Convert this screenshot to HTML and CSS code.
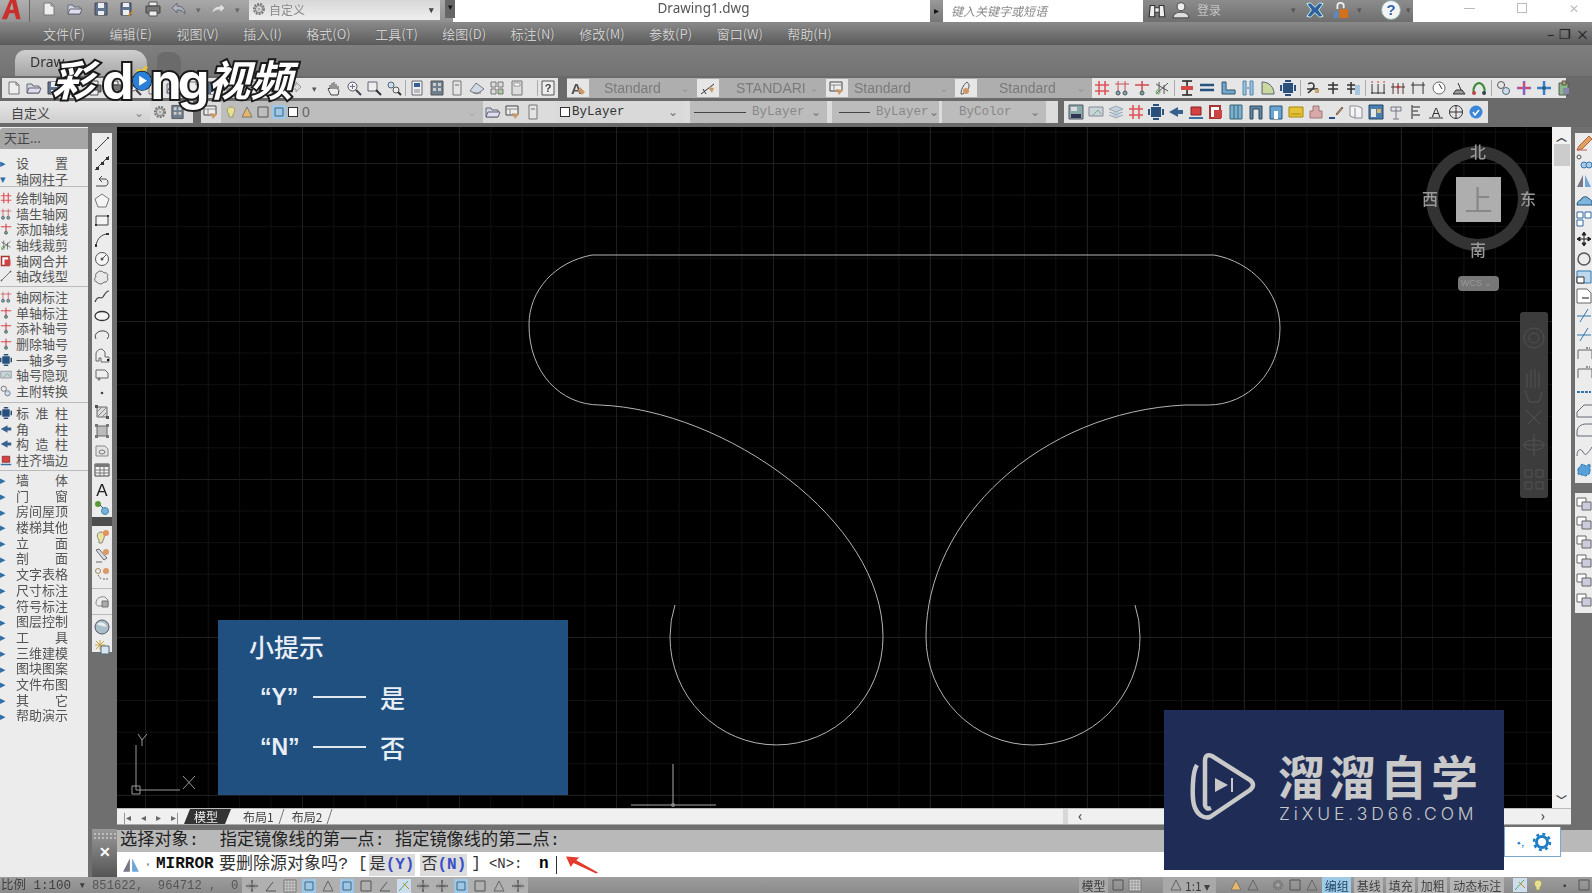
FILE: index.html
```html
<!DOCTYPE html>
<html lang="zh">
<head>
<meta charset="utf-8">
<title>Drawing1.dwg</title>
<link rel="stylesheet" href="styles.css">
</head>
<body>
<svg class="defs" aria-hidden="true">
<defs>
<symbol id="doc" viewBox="0 0 16 16"><path d="M3 2h7l3 3v9H3z" fill="#eee" stroke="#777"/><path d="M10 2v3h3" fill="none" stroke="#777"/></symbol>
<symbol id="open" viewBox="0 0 16 16"><path d="M1 4h5l1 2h6v7H1z" fill="#cfd6dc" stroke="#667"/><path d="M3 8h12l-2 5H1z" fill="#dde" stroke="#667"/></symbol>
<symbol id="save" viewBox="0 0 16 16"><path d="M2 2h12v12H2z" fill="#5f7590" stroke="#445"/><path d="M5 2h6v5H5zM5 10h6v4H5z" fill="#eee"/></symbol>
<symbol id="saveas" viewBox="0 0 16 16"><path d="M2 2h10v12H2z" fill="#5f7590" stroke="#445"/><path d="M4 2h6v4H4zM4 9h6v5H4z" fill="#eee"/><path d="M9 14l5-5 1 1-5 5z" fill="#d98b2b"/></symbol>
<symbol id="print" viewBox="0 0 16 16"><path d="M4 1h8v4H4z" fill="#eee" stroke="#555"/><path d="M1 5h14v7H1z" fill="#777" stroke="#444"/><path d="M4 10h8v5H4z" fill="#eee" stroke="#555"/></symbol>
<symbol id="undo" viewBox="0 0 16 16"><path d="M6 2L1 7l5 5V9c4 0 6 1 8 4 0-5-3-8-8-8z" fill="#aab2ba" stroke="#667"/></symbol>
<symbol id="redo" viewBox="0 0 16 16"><path d="M10 2l5 5-5 5V9C6 9 4 10 2 13c0-5 3-8 8-8z" fill="#ddd" stroke="#999"/></symbol>
<symbol id="gear" viewBox="0 0 16 16"><circle cx="8" cy="8" r="5" fill="none" stroke="#777" stroke-width="2" stroke-dasharray="2 1"/><circle cx="8" cy="8" r="3.5" fill="none" stroke="#777"/><circle cx="8" cy="8" r="1.5" fill="#aaa"/></symbol>
<symbol id="pan" viewBox="0 0 16 16"><path d="M4 9V5m2 4V3m2 6V2m2 7V4m2 6V6M4 9L3 8 2 9l3 6h7l1-5" fill="#eee" stroke="#444"/></symbol>
<symbol id="zoom" viewBox="0 0 16 16"><circle cx="6.5" cy="6.5" r="4.5" fill="#eef" stroke="#555"/><path d="M10 10l5 5" stroke="#444" stroke-width="2"/><path d="M4 6.500h5M6.500 4v5" stroke="#777"/></symbol>
<symbol id="zoomw" viewBox="0 0 16 16"><path d="M2 2h9v9H2z" fill="#eee" stroke="#667"/><path d="M10 10l5 5" stroke="#333" stroke-width="2"/></symbol>
<symbol id="zoomp" viewBox="0 0 16 16"><circle cx="5" cy="5" r="3" fill="#cde" stroke="#567"/><circle cx="10" cy="10" r="3" fill="#eee" stroke="#555"/><path d="M12 12l3 3" stroke="#333" stroke-width="2"/></symbol>
<symbol id="props" viewBox="0 0 16 16"><path d="M3 1h10v14H3z" fill="#eee" stroke="#667"/><path d="M5 3h6v4H5z" fill="#345f95"/><path d="M5 10h6M5 12h6" stroke="#888"/></symbol>
<symbol id="adc" viewBox="0 0 16 16"><path d="M2 1h12v14H2z" fill="#6f7f8f" stroke="#555"/><path d="M4 3h3v3H4zM9 3h3v3H9zM4 8h3v3H4zM9 8h3v3H9z" fill="#ccc"/></symbol>
<symbol id="tool" viewBox="0 0 16 16"><path d="M4 1h8v14H4z" fill="#e4e4e4" stroke="#777"/><path d="M6 4h4v2H6z" fill="#aaa"/></symbol>
<symbol id="sheet" viewBox="0 0 16 16"><path d="M1 11l6-8 8 6-7 5z" fill="#cfdbe4" stroke="#778"/><path d="M4 13h8" stroke="#777"/></symbol>
<symbol id="mark" viewBox="0 0 16 16"><path d="M2 2h5v5H2zM9 2h5v5H9zM2 9h5v5H2z" fill="#ddd" stroke="#777"/><path d="M9 9h5v5H9z" fill="#ac9" stroke="#777"/></symbol>
<symbol id="calc" viewBox="0 0 16 16"><path d="M3 1h10v14H3z" fill="#ddd" stroke="#777"/><path d="M5 3h6v3H5z" fill="#fff" stroke="#999"/></symbol>
<symbol id="q" viewBox="0 0 16 16"><path d="M2 1h12v14H2z" fill="#eee" stroke="#555"/><text x="8" y="12" text-anchor="middle" font-size="11" font-family="Liberation Sans" fill="#444" font-weight="700">?</text></symbol>
<symbol id="ast" viewBox="0 0 16 16"><text x="1" y="14" font-size="15" font-family="Liberation Sans" font-weight="700" fill="#555">A</text><path d="M10 7l5 5-3 3-4-4z" fill="#c96"/></symbol>
<symbol id="dst" viewBox="0 0 16 16"><path d="M1 14L14 4M3 9l3 5" stroke="#333" fill="none"/><path d="M8 7l6 1-2 5z" fill="#c96"/></symbol>
<symbol id="tst" viewBox="0 0 16 16"><path d="M1 2h12v9H1z" fill="#eee" stroke="#444"/><path d="M1 5h12M5 5v6" stroke="#888"/><path d="M7 9l7 1-4 5z" fill="#c96"/></symbol>
<symbol id="mst" viewBox="0 0 16 16"><path d="M3 14c0-4 2-9 6-12 2 2 3 4 1 7l-5 5z" fill="none" stroke="#555"/><circle cx="8" cy="11" r="3" fill="#c96"/></symbol>
<symbol id="hash" viewBox="0 0 16 16"><path d="M5 1v14M11 1v14M1 5h14M1 11h14" stroke="#e0545a" stroke-width="1.600"/></symbol>
<symbol id="axis" viewBox="0 0 16 16"><path d="M4 1v10M11 1v10M1 4h14" stroke="#c85058"/><circle cx="4" cy="13" r="2" fill="#7ab" stroke="#555"/><circle cx="11" cy="13" r="2" fill="#7ab" stroke="#555"/></symbol>
<symbol id="axt" viewBox="0 0 16 16"><path d="M1 5h14M8 1v10" stroke="#d04a50" stroke-width="1.500"/><circle cx="8" cy="13" r="2" fill="#6a9" stroke="#555"/></symbol>
<symbol id="scis" viewBox="0 0 16 16"><path d="M2 14L14 3M2 4l12 7M5 2v10M10 5v9" stroke="#555" fill="none"/><circle cx="4" cy="12" r="2" fill="none" stroke="#6a6"/></symbol>
<symbol id="col" viewBox="0 0 16 16"><path d="M3 1h10M3 15h10M8 1v14" stroke="#222" stroke-width="1.500"/><path d="M2 6h12v4H2z" fill="#d24b45"/></symbol>
<symbol id="eq" viewBox="0 0 16 16"><path d="M1 5h14M1 10h14" stroke="#27517e" stroke-width="2.500"/></symbol>
<symbol id="wall" viewBox="0 0 16 16"><path d="M2 2v12h13v-4H6V2z" fill="#6fa8d0" stroke="#356"/></symbol>
<symbol id="bars" viewBox="0 0 16 16"><path d="M3 1v14h3V1zM10 1v14h3V1z" fill="#9cc3e0" stroke="#58a"/><path d="M7 8h2" stroke="#36a"/></symbol>
<symbol id="fan" viewBox="0 0 16 16"><path d="M2 14V2c7 0 12 5 12 12z" fill="#cdd8a0" stroke="#567"/></symbol>
<symbol id="dia" viewBox="0 0 16 16"><path d="M3 3h10v10H3z" fill="#29507d"/><path d="M5 1h6M5 15h6M1 5v6M15 5v6" stroke="#29507d" stroke-width="2"/></symbol>
<symbol id="d1" viewBox="0 0 16 16"><path d="M3 4c3-2 6-1 6 2s-3 4-6 7M2 9h11" stroke="#333" stroke-width="1.500" fill="none"/><path d="M10 9h4v4h-4z" fill="#c8a56a"/></symbol>
<symbol id="d2" viewBox="0 0 16 16"><path d="M3 5h10M3 9h10M8 2v12" stroke="#333" stroke-width="1.500"/></symbol>
<symbol id="d3" viewBox="0 0 16 16"><path d="M2 5h8M2 9h8M6 2v12" stroke="#333" stroke-width="1.500"/><path d="M10 5h5v10h-5z" fill="#a8c6e2"/></symbol>
<symbol id="dt" viewBox="0 0 16 16"><path d="M2 4v10M8 4v10M14 4v10M1 13h14" stroke="#333"/><path d="M2 1v2M8 1v2M14 1v2" stroke="#d33"/></symbol>
<symbol id="dt2" viewBox="0 0 16 16"><path d="M3 3v11M8 3v11M13 3v11M1 7h14" stroke="#533"/><circle cx="8" cy="7" r="1.500" fill="#c33"/></symbol>
<symbol id="dt3" viewBox="0 0 16 16"><path d="M3 2v12M13 2v12M1 5h14" stroke="#333"/></symbol>
<symbol id="clock" viewBox="0 0 16 16"><circle cx="8" cy="8" r="6" fill="#fff" stroke="#667"/><path d="M8 4l3 5" stroke="#333"/></symbol>
<symbol id="mic" viewBox="0 0 16 16"><path d="M2 14h12l-3-4H5zM7 3l3 7" stroke="#333" fill="#999"/></symbol>
<symbol id="loop" viewBox="0 0 16 16"><path d="M3 13c-2-5 2-10 5-10s7 5 5 10" fill="none" stroke="#3a8a3a" stroke-width="2"/><circle cx="3" cy="13" r="2" fill="#b44"/><circle cx="13" cy="13" r="2" fill="#345"/></symbol>
<symbol id="ring" viewBox="0 0 16 16"><circle cx="5" cy="5" r="3.500" fill="none" stroke="#555"/><circle cx="10" cy="11" r="3.500" fill="#cde" stroke="#567"/></symbol>
<symbol id="cross" viewBox="0 0 16 16"><path d="M8 1v14M1 8h14" stroke="#8860c0" stroke-width="2.500"/><path d="M8 3v3M3 8h3M10 8h3" stroke="#e44" stroke-width="2"/></symbol>
<symbol id="crossb" viewBox="0 0 16 16"><path d="M8 1v14M1 8h14" stroke="#3d7fc8" stroke-width="2.500"/><circle cx="8" cy="8" r="2" fill="#267"/></symbol>
<symbol id="clip" viewBox="0 0 16 16"><path d="M3 3h9v12H3z" fill="#8b8" stroke="#555"/><path d="M6 1h4v4H6z" fill="#b96" stroke="#555"/><path d="M7 8h6v6H7z" fill="#88a"/></symbol>
<symbol id="dwg" viewBox="0 0 16 16"><path d="M1 1h14v14H1z" fill="#8aa" stroke="#556"/><path d="M3 10h10v4H3z" fill="#335"/><path d="M3 3h6v4H3z" fill="#ddd"/></symbol>
<symbol id="map" viewBox="0 0 16 16"><path d="M1 3h14v9H1z" fill="#c8d4d8" stroke="#889"/><path d="M4 12l6-6 3 4" stroke="#7a8" fill="none"/></symbol>
<symbol id="stack" viewBox="0 0 16 16"><path d="M1 5l7-3 7 3-7 3zM1 8l7 3 7-3M1 11l7 3 7-3" fill="#c4d0da" stroke="#9ab"/></symbol>
<symbol id="ctr" viewBox="0 0 16 16"><path d="M1 8l9-5v3h5v4h-5v3z" fill="#36628f"/></symbol>
<symbol id="red" viewBox="0 0 16 16"><path d="M3 3h10v8H3z" fill="#d44343" stroke="#822"/><path d="M1 13h14v2H1z" fill="#3a6fa0"/></symbol>
<symbol id="red2" viewBox="0 0 16 16"><path d="M2 2h10v12H2z" fill="#fff" stroke="#a33" stroke-width="2"/><path d="M6 6h8v8H6z" fill="#c44"/></symbol>
<symbol id="blue" viewBox="0 0 16 16"><path d="M2 1h12v14H2z" fill="#7fb0d2" stroke="#367"/><path d="M6 1v14M10 1v14" stroke="#367"/></symbol>
<symbol id="arch" viewBox="0 0 16 16"><path d="M2 15V2h12v13h-3V5H5v10z" fill="#5a86a8" stroke="#345"/></symbol>
<symbol id="arch2" viewBox="0 0 16 16"><path d="M2 15V2h12v13z" fill="#6aa3d0" stroke="#257"/><path d="M6 7h4v8H6z" fill="#fff"/></symbol>
<symbol id="env" viewBox="0 0 16 16"><path d="M1 3h14v10H1z" fill="#e6c23c" stroke="#a80"/><path d="M3 10h10" stroke="#a80"/></symbol>
<symbol id="stamp" viewBox="0 0 16 16"><path d="M5 2h6v5h3v7H2V7h3z" fill="#d9a9a9" stroke="#977"/></symbol>
<symbol id="pen" viewBox="0 0 16 16"><path d="M1 14h6" stroke="#27507f" stroke-width="2"/><path d="M8 10l6-7 1 1-6 7z" fill="#c96" stroke="#765"/></symbol>
<symbol id="book" viewBox="0 0 16 16"><path d="M2 2h7l5 2v10H7l-5-2z" fill="#f4f4f4" stroke="#889"/><path d="M7 4v10" stroke="#889"/></symbol>
<symbol id="win" viewBox="0 0 16 16"><path d="M1 1h14v14H1z" fill="#4a7fae" stroke="#246"/><path d="M3 5h5v8H3z" fill="#e8e8e8"/><path d="M9 5h4v4H9z" fill="#d9b36a"/></symbol>
<symbol id="tree" viewBox="0 0 16 16"><path d="M3 3h10M8 3v12M3 3v4h10V3M5 15h6" stroke="#778" fill="none"/></symbol>
<symbol id="flag" viewBox="0 0 16 16"><path d="M4 1v14M4 3h8M4 7h6M4 11h8" stroke="#666" stroke-width="1.500"/></symbol>
<symbol id="tri" viewBox="0 0 16 16"><text x="8" y="13" text-anchor="middle" font-size="13" font-family="Liberation Sans" fill="#333">A</text><path d="M1 14h14" stroke="#333"/></symbol>
<symbol id="tgt" viewBox="0 0 16 16"><circle cx="8" cy="8" r="6.500" fill="none" stroke="#333"/><path d="M8 1v14M1 8h14" stroke="#333"/></symbol>
<symbol id="hlp" viewBox="0 0 16 16"><circle cx="8" cy="8" r="6.500" fill="#3a86d8"/><path d="M5 8l2 3 4-5" stroke="#fff" fill="none" stroke-width="1.500"/></symbol>
<symbol id="s-line" viewBox="0 0 16 16"><path d="M2 14L14 2" stroke="#444"/><path d="M1 13h2v2H1zM13 1h2v2h-2z" fill="#555"/></symbol>
<symbol id="s-xl" viewBox="0 0 16 16"><path d="M1 15L15 1" stroke="#444"/><path d="M2 12h3v3H2zM7 7h3v3H7zM12 2h3v3h-3z" fill="#333"/></symbol>
<symbol id="s-pl" viewBox="0 0 16 16"><path d="M2 12h9c4 0 4-7 0-7H6M8 2L5 5l3 3" stroke="#444" fill="none"/></symbol>
<symbol id="s-pg" viewBox="0 0 16 16"><path d="M8 1l7 5-3 8H4L1 6z" fill="#f4f4f4" stroke="#777"/></symbol>
<symbol id="s-rc" viewBox="0 0 16 16"><path d="M2 4h12v9H2z" fill="#f4f4f4" stroke="#444"/><path d="M1 12h2v2H1zM13 3h2v2h-2z" fill="#333"/></symbol>
<symbol id="s-ar" viewBox="0 0 16 16"><path d="M2 14C3 6 8 2 14 2" fill="none" stroke="#444"/><path d="M1 12h2v3H1zM12 1h3v2h-3z" fill="#333"/></symbol>
<symbol id="s-ci" viewBox="0 0 16 16"><circle cx="8" cy="8" r="6.500" fill="#f6f6f6" stroke="#555"/><circle cx="8" cy="8" r="1.500" fill="#555"/><path d="M8 8l4-4" stroke="#555"/></symbol>
<symbol id="s-cl" viewBox="0 0 16 16"><path d="M3 3c2-3 6-2 7 0 3-1 5 2 3 4 2 2 0 6-3 5-2 3-6 2-7 0-3 0-3-4-1-5-1-2 0-4 1-4z" fill="#e8e8e8" stroke="#666"/></symbol>
<symbol id="s-sp" viewBox="0 0 16 16"><path d="M1 13c3-8 6-2 8-5s3-6 6-6" fill="none" stroke="#444" stroke-width="1.200"/></symbol>
<symbol id="s-el" viewBox="0 0 16 16"><ellipse cx="8" cy="8" rx="7" ry="4.500" fill="#f4f4f4" stroke="#333" stroke-width="1.300"/></symbol>
<symbol id="s-ea" viewBox="0 0 16 16"><path d="M2 12C-1 7 5 3 10 4s6 5 3 8" fill="none" stroke="#444"/></symbol>
<symbol id="s-in" viewBox="0 0 16 16"><path d="M2 14V7c0-3 3-5 6-5l3 3v5h4v5H7v-4H5v3z" fill="#eee" stroke="#666"/><path d="M13 12h2v2h-2z" fill="#111"/></symbol>
<symbol id="s-bk" viewBox="0 0 16 16"><path d="M2 4h9l3 3v5H2z" fill="#eee" stroke="#666"/><circle cx="5" cy="13" r="1.500" fill="#777"/></symbol>
<symbol id="s-pt" viewBox="0 0 16 16"><circle cx="8" cy="8" r="1.300" fill="#444"/></symbol>
<symbol id="s-ha" viewBox="0 0 16 16"><path d="M3 3h10v10H3z" fill="#ddd" stroke="#666"/><path d="M3 8l5-5M3 13L13 3M8 13l5-5" stroke="#888"/><path d="M1 1h3v3H1zM12 12h3v3h-3z" fill="#555"/></symbol>
<symbol id="s-gr" viewBox="0 0 16 16"><path d="M3 3h10v10H3z" fill="#bbb" stroke="#666"/><path d="M1 1h3v3H1zM12 12h3v3h-3zM12 1h3v3h-3zM1 12h3v3H1z" fill="#777"/></symbol>
<symbol id="s-rg" viewBox="0 0 16 16"><path d="M2 3h9l3 3v7H2z" fill="#e4e4e4" stroke="#888"/><ellipse cx="8" cy="9" rx="3" ry="2" fill="none" stroke="#777"/></symbol>
<symbol id="s-tb" viewBox="0 0 16 16"><path d="M1 2h14v12H1z" fill="#f4f4f4" stroke="#444"/><path d="M1 2h14v3H1z" fill="#777"/><path d="M1 8h14M1 11h14M6 5v9M10 5v9" stroke="#777"/></symbol>
<symbol id="s-A" viewBox="0 0 16 16"><text x="8" y="15" text-anchor="middle" font-size="17" font-family="Liberation Sans" fill="#222">A</text></symbol>
<symbol id="s-ad" viewBox="0 0 16 16"><circle cx="4" cy="4" r="3" fill="#5a9a3a"/><circle cx="11" cy="11" r="3.500" fill="#7ab0dc" stroke="#48a"/><path d="M6 5l3 3" stroke="#555"/></symbol>
<symbol id="s-bulb" viewBox="0 0 16 16"><path d="M5 14V11C2 8 3 3 7 3c3 0 4 3 3 6l-2 5z" fill="#e9e2a0" stroke="#887"/><circle cx="12" cy="4" r="3" fill="#e0935a"/></symbol>
<symbol id="s-mt" viewBox="0 0 16 16"><path d="M2 2l8 10 3-2-8-9z" fill="#ddd" stroke="#667"/><circle cx="12" cy="4" r="3" fill="#d99a66"/><path d="M2 14h6" stroke="#666"/></symbol>
<symbol id="s-lm" viewBox="0 0 16 16"><circle cx="4" cy="4" r="2.500" fill="#eee" stroke="#a85"/><circle cx="12" cy="4" r="3" fill="#d99a66"/><path d="M4 8l3 4M9 12h5" stroke="#666" stroke-dasharray="2 1"/></symbol>
<symbol id="s-ld" viewBox="0 0 16 16"><path d="M2 10c0-5 5-7 9-6l3 3v6H5c-2 0-3-1-3-3z" fill="none" stroke="#888"/><path d="M8 8h6v6H8z" fill="#aaa" stroke="#777"/></symbol>
<symbol id="s-gl" viewBox="0 0 16 16"><circle cx="8" cy="8" r="7" fill="#aac0c8" stroke="#556"/><path d="M3 5c4-3 8-1 10 3-2-1-8-1-10-3z" fill="#eee"/></symbol>
<symbol id="s-sun" viewBox="0 0 16 16"><path d="M6 1v10M1 6h10M2 2l8 8M10 2l-8 8" stroke="#c8a440"/><path d="M7 7h8v8H7z" fill="#d8e6f2" stroke="#567"/></symbol>
<symbol id="r-er" viewBox="0 0 16 16"><path d="M1 15l2-4L13 1l3 3L6 14z" fill="#e0a060" stroke="#a64"/><path d="M1 15h10" stroke="#c55"/></symbol>
<symbol id="r-co" viewBox="0 0 16 16"><circle cx="3" cy="3" r="2" fill="none" stroke="#555"/><circle cx="8" cy="11" r="3" fill="#a9c9e6" stroke="#37a"/><circle cx="13" cy="11" r="3" fill="#a9c9e6" stroke="#37a"/></symbol>
<symbol id="r-mi" viewBox="0 0 16 16"><path d="M7 2v12H1z" fill="#778"/><path d="M9 2v12h6z" fill="#6ea6d6"/></symbol>
<symbol id="r-of" viewBox="0 0 16 16"><path d="M1 13c0-3 2-5 4-5 0-3 6-5 8-1 2 0 3 2 3 6z" fill="#7fb4dd" stroke="#257"/></symbol>
<symbol id="r-ay" viewBox="0 0 16 16"><path d="M1 1h6v6H1zM9 1h6v6H9zM1 9h6v6H1z" fill="#fff" stroke="#36a"/></symbol>
<symbol id="r-mv" viewBox="0 0 16 16"><path d="M8 1l2 3H6zM8 15l-2-3h4zM1 8l3-2v4zM15 8l-3 2V6zM4 8h8M8 4v8" fill="#222" stroke="#222"/></symbol>
<symbol id="r-ro" viewBox="0 0 16 16"><circle cx="8" cy="9" r="6" fill="none" stroke="#555" stroke-width="1.500"/></symbol>
<symbol id="r-sc" viewBox="0 0 16 16"><path d="M1 2h14v12H1z" fill="#bcd8ee" stroke="#37a"/><path d="M1 8h7v6H1z" fill="#fff" stroke="#333"/></symbol>
<symbol id="r-st" viewBox="0 0 16 16"><path d="M1 1h10l4 4v10H1z" fill="#fff" stroke="#666"/><path d="M6 10h7" stroke="#111"/></symbol>
<symbol id="r-tr" viewBox="0 0 16 16"><path d="M1 9h14M4 15L12 2" stroke="#37a"/></symbol>
<symbol id="r-bx" viewBox="0 0 16 16"><path d="M2 13V4h14v9" fill="none" stroke="#666"/><path d="M10 2h4" stroke="#333" stroke-dasharray="2 1"/></symbol>
<symbol id="r-j" viewBox="0 0 16 16"><path d="M1 8h14" stroke="#37a" stroke-dasharray="3 1" stroke-width="2"/></symbol>
<symbol id="r-ch" viewBox="0 0 16 16"><path d="M1 14V9l7-7h8M1 14h15" fill="none" stroke="#667"/></symbol>
<symbol id="r-fi" viewBox="0 0 16 16"><path d="M1 14V10C1 5 5 2 10 2h6M1 14h15" fill="none" stroke="#667"/></symbol>
<symbol id="r-bl" viewBox="0 0 16 16"><path d="M1 14c0-7 4-8 6-4s4 3 9-5" fill="none" stroke="#667"/></symbol>
<symbol id="r-ex" viewBox="0 0 16 16"><path d="M2 8l4-5 4 2 4-2v9l-4 3-8-2z" fill="#5aa0d8" stroke="#27a" stroke-dasharray="3 1"/></symbol>
<symbol id="r-w1" viewBox="0 0 16 16"><path d="M1 2h9v8H1z" fill="#fff" stroke="#666"/><path d="M6 6h9v8H6z" fill="#ccd" stroke="#666"/></symbol>
<symbol id="grid" viewBox="0 0 14 14"><path d="M1 1h12v12H1z" fill="#cfcfcf" stroke="#777"/><path d="M4 1v12M7 1v12M10 1v12M1 4h12M1 7h12M1 10h12" stroke="#888" stroke-width=".7"/></symbol>
<symbol id="sq" viewBox="0 0 14 14"><path d="M2 2h10v10H2z" fill="none" stroke="#555"/></symbol>
<symbol id="sqb" viewBox="0 0 14 14"><path d="M0 0h14v14H0z" fill="#9cc7e8"/><path d="M3 3h8v8H3z" fill="none" stroke="#467"/></symbol>
<symbol id="plus" viewBox="0 0 14 14"><path d="M7 1v12M1 7h12" stroke="#555" stroke-width="1.500"/><path d="M3 5h8v4H3z" fill="none" stroke="#999"/></symbol>
<symbol id="ang" viewBox="0 0 14 14"><path d="M2 12h10M2 12l7-9" stroke="#555" fill="none"/></symbol>
<symbol id="iso" viewBox="0 0 14 14"><path d="M0 0h14v14H0z" fill="#cde"/><path d="M2 12L11 2" stroke="#5a6"/><path d="M6 4l6 6" stroke="#c80"/></symbol>
<symbol id="bulb" viewBox="0 0 14 14"><path d="M5 12V9C2 7 3 2 7 2s5 5 2 7v3z" fill="#e8e090" stroke="#996"/></symbol>
<symbol id="ltri" viewBox="0 0 14 14"><path d="M7 2l5 10H2z" fill="none" stroke="#666"/></symbol>
<symbol id="ltri2" viewBox="0 0 14 14"><path d="M7 2l5 10H2z" fill="#e9b76a" stroke="#777"/></symbol>
<symbol id="bino" viewBox="0 0 16 16"><path d="M2 4h4v10H1zM10 4h4l1 10h-5zM6 6h4v4H6z" fill="#eee" stroke="#333"/></symbol>
<symbol id="user" viewBox="0 0 16 16"><circle cx="8" cy="5" r="3.500" fill="#eee" stroke="#555"/><path d="M1 15c0-4 3-5 7-5s7 1 7 5z" fill="#ddd" stroke="#555"/></symbol>
<symbol id="xx" viewBox="0 0 20 20"><path d="M1 3l4-1 5 5 5-5 4 1-5 7 5 7-4 1-5-5-5 5-4-1 5-7z" fill="#2f5f9f" stroke="#cfe"/></symbol>
<symbol id="lock" viewBox="0 0 18 20"><path d="M5 9V5c0-4 7-4 7 0v3" fill="none" stroke="#eee" stroke-width="2"/><path d="M7 9h10v10H7z" fill="#d2701c"/><path d="M1 13l5-3v9H1z" fill="#5a8ac0"/></symbol>
<symbol id="help" viewBox="0 0 22 22"><circle cx="11" cy="11" r="9.500" fill="#f4f4f4" stroke="#8aa"/><text x="11" y="16" text-anchor="middle" font-size="15" font-weight="700" font-family="Liberation Sans" fill="#2a63b0">?</text></symbol>
<symbol id="autocad" viewBox="0 0 28 32"><path d="M2 28L13 2h5l6 26h-5l-2-7h-6l-3 7zM11 17h5l-2-9z" fill="#c9302c"/></symbol>
<symbol id="cog" viewBox="0 0 20 20"><circle cx="10" cy="10" r="5.500" fill="none" stroke="#1f7fc4" stroke-width="3"/><circle cx="10" cy="10" r="8" fill="none" stroke="#1f7fc4" stroke-width="2.500" stroke-dasharray="3 3.300"/></symbol>
</defs>
</svg>

<div class="app">
  <header class="titlebar">
    <div class="qat">
      <svg class="i t"><use href="#doc"/></svg><svg class="i t"><use href="#open"/></svg><svg class="i t"><use href="#save"/></svg><svg class="i t"><use href="#saveas"/></svg><svg class="i t"><use href="#print"/></svg><svg class="i t"><use href="#undo"/></svg><span class="dd">▾</span><svg class="i t"><use href="#redo"/></svg><span class="dd">▾</span>
      <div class="qcombo"><svg class="i"><use href="#gear"/></svg><span>自定义</span><b>▾</b></div>
      <div class="qdrop">▾</div>
    </div>
    <div class="apptitle">Drawing1.dwg</div>
    <div class="search"><span class="sarrow">▸</span><span class="sfield">键入关键字或短语</span></div>
    <div class="info">
      <svg class="i"><use href="#bino"/></svg><svg class="i"><use href="#user"/></svg><span class="login">登录</span>
      <span class="dd gap1">▾</span>
      <svg class="i ib"><use href="#xx"/></svg><svg class="i ib"><use href="#lock"/></svg><span class="dd">▾</span>
      <svg class="i ic"><use href="#help"/></svg><span class="dd">▾</span>
    </div>
    <div class="winbtns"><span class="wmin"></span><span class="wmax"></span><span class="wclose">✕</span></div>
  </header>
  <div class="appbtn"><svg class="abi"><use href="#autocad"/></svg></div>

  <nav class="menubar">
    <span>文件(F)</span><span>编辑(E)</span><span>视图(V)</span><span>插入(I)</span><span>格式(O)</span><span>工具(T)</span><span>绘图(D)</span><span>标注(N)</span><span>修改(M)</span><span>参数(P)</span><span>窗口(W)</span><span>帮助(H)</span>
    <div class="mdi">– ❐ ×</div>
  </nav>

  <div class="tabstrip"><div class="doctab">Draw</div><div class="newtab"></div></div>

  <div class="toolbars">
    <div class="tbrow">
      <div class="seg s1">
        <svg class="i t20"><use href="#doc"/></svg><svg class="i t20"><use href="#open"/></svg><svg class="i t20"><use href="#save"/></svg><svg class="i t20"><use href="#saveas"/></svg><svg class="i t20"><use href="#print"/></svg><svg class="i t20"><use href="#print"/></svg><svg class="i t20"><use href="#zoom"/></svg><svg class="i t20"><use href="#doc"/></svg><svg class="i t20"><use href="#open"/></svg><svg class="i t20"><use href="#doc"/></svg><svg class="i t20"><use href="#save"/></svg><svg class="i t20"><use href="#open"/></svg><svg class="i t20"><use href="#doc"/></svg><svg class="i t20"><use href="#undo"/></svg>
        <svg class="i t20"><use href="#redo"/></svg><span class="dd t20b">▾</span>
        <svg class="i t20"><use href="#pan"/></svg><svg class="i t20"><use href="#zoom"/></svg><svg class="i t20"><use href="#zoomw"/></svg><svg class="i t20"><use href="#zoomp"/></svg>
        <i class="sep"></i>
        <svg class="i t20"><use href="#props"/></svg><svg class="i t20"><use href="#adc"/></svg><svg class="i t20"><use href="#tool"/></svg><svg class="i t20"><use href="#sheet"/></svg><svg class="i t20"><use href="#mark"/></svg><svg class="i t20"><use href="#calc"/></svg>
        <i class="sep sepq"></i>
        <svg class="i t20"><use href="#q"/></svg>
      </div>
      <div class="seg s2">
        <div class="sty w1"><svg class="i"><use href="#ast"/></svg><span class="pc pc1">Standard</span><b>⌄</b></div>
        <div class="sty w2"><svg class="i"><use href="#dst"/></svg><span class="pc pc2">STANDARI</span><b>⌄</b></div>
        <div class="sty w3"><svg class="i"><use href="#tst"/></svg><span class="pc pc3">Standard</span><b>⌄</b></div>
        <div class="sty w4"><svg class="i"><use href="#mst"/></svg><span class="pc pc4">Standard</span><b>⌄</b></div>
      </div>
      <div class="seg s3">
        <svg class="i t20"><use href="#hash"/></svg><svg class="i t20"><use href="#axis"/></svg><svg class="i t20"><use href="#axt"/></svg><svg class="i t20"><use href="#scis"/></svg><i class="sep"></i>
        <svg class="i t20"><use href="#col"/></svg><svg class="i t20"><use href="#eq"/></svg><svg class="i t20"><use href="#wall"/></svg><svg class="i t20"><use href="#bars"/></svg><svg class="i t20"><use href="#fan"/></svg><svg class="i t20"><use href="#dia"/></svg><i class="sep"></i>
        <svg class="i t20"><use href="#d1"/></svg><svg class="i t20"><use href="#d2"/></svg><svg class="i t20"><use href="#d3"/></svg><i class="sep"></i>
        <svg class="i t20"><use href="#dt"/></svg><svg class="i t20"><use href="#dt2"/></svg><svg class="i t20"><use href="#dt3"/></svg><svg class="i t20"><use href="#clock"/></svg><svg class="i t20"><use href="#mic"/></svg><svg class="i t20"><use href="#loop"/></svg><i class="sep"></i>
        <svg class="i t20"><use href="#ring"/></svg><svg class="i t20"><use href="#cross"/></svg><svg class="i t20"><use href="#crossb"/></svg><svg class="i t20"><use href="#clip"/></svg>
      </div>
    </div>
    <div class="tbrow r2">
      <div class="seg c1"><div class="wscombo"><span>自定义</span><b>⌄</b></div><svg class="i t20"><use href="#gear"/></svg><svg class="i t16"><use href="#adc"/></svg></div>
      <div class="seg c2">
        <svg class="i t20"><use href="#tst"/></svg><div class="layer"><svg class="l"><use href="#bulb"/></svg><svg class="l"><use href="#ltri2"/></svg><svg class="l"><use href="#sq"/></svg><svg class="l"><use href="#sqb"/></svg><i class="swatch"></i><span>0</span><b>⌄</b></div>
        <svg class="i t20"><use href="#open"/></svg><svg class="i t20"><use href="#tst"/></svg><svg class="i t20"><use href="#tool"/></svg>
      </div>
      <div class="seg c3">
        <div class="by b1"><i class="swatch"></i><span>ByLayer</span><b>⌄</b></div>
        <div class="by b2"><i class="ln ln1"></i><span class="dim">ByLayer</span><b>⌄</b></div>
        <div class="by b3"><i class="ln ln2"></i><span class="dim">ByLayer</span><b>⌄</b></div>
        <div class="by b4"><span class="dim">ByColor</span><b>⌄</b></div>
      </div>
      <div class="seg c4">
        <svg class="i t20"><use href="#dwg"/></svg><svg class="i t20"><use href="#map"/></svg><svg class="i t20"><use href="#stack"/></svg><svg class="i t20"><use href="#hash"/></svg><svg class="i t20"><use href="#dia"/></svg><svg class="i t20"><use href="#ctr"/></svg><svg class="i t20"><use href="#red"/></svg><svg class="i t20"><use href="#red2"/></svg><svg class="i t20"><use href="#blue"/></svg><svg class="i t20"><use href="#arch"/></svg><svg class="i t20"><use href="#arch2"/></svg><svg class="i t20"><use href="#env"/></svg><svg class="i t20"><use href="#stamp"/></svg><svg class="i t20"><use href="#pen"/></svg><svg class="i t20"><use href="#book"/></svg><svg class="i t20"><use href="#win"/></svg><svg class="i t20"><use href="#tree"/></svg><svg class="i t20"><use href="#flag"/></svg><svg class="i t20"><use href="#tri"/></svg><svg class="i t20"><use href="#tgt"/></svg><svg class="i t20"><use href="#hlp"/></svg>
      </div>
    </div>
  </div>

  <main class="workspace">
    <aside class="tpanel">
      <div class="tphead">天正...</div>
      <div class="group">
        <div class="it"><i class="ar">▸</i><p class="j"><span>设</span><span>置</span></p></div>
        <div class="it"><i class="ar dn">▾</i><p>轴网柱子</p></div>
      </div>
      <div class="group">
        <div class="it"><svg class="gi"><use href="#hash"/></svg><p>绘制轴网</p></div>
        <div class="it"><svg class="gi"><use href="#axis"/></svg><p>墙生轴网</p></div>
        <div class="it"><svg class="gi"><use href="#axt"/></svg><p>添加轴线</p></div>
        <div class="it"><svg class="gi"><use href="#scis"/></svg><p>轴线裁剪</p></div>
        <div class="it"><svg class="gi"><use href="#red2"/></svg><p>轴网合并</p></div>
        <div class="it"><svg class="gi"><use href="#s-line"/></svg><p>轴改线型</p></div>
      </div>
      <div class="group">
        <div class="it"><svg class="gi"><use href="#axis"/></svg><p>轴网标注</p></div>
        <div class="it"><svg class="gi"><use href="#axt"/></svg><p>单轴标注</p></div>
        <div class="it"><svg class="gi"><use href="#axt"/></svg><p>添补轴号</p></div>
        <div class="it"><svg class="gi"><use href="#axt"/></svg><p>删除轴号</p></div>
        <div class="it"><svg class="gi"><use href="#dia"/></svg><p>一轴多号</p></div>
        <div class="it"><svg class="gi"><use href="#map"/></svg><p>轴号隐现</p></div>
        <div class="it"><svg class="gi"><use href="#ring"/></svg><p>主附转换</p></div>
      </div>
      <div class="group">
        <div class="it"><svg class="gi"><use href="#dia"/></svg><p class="j"><span>标</span><span>准</span><span>柱</span></p></div>
        <div class="it"><svg class="gi"><use href="#ctr"/></svg><p class="j"><span>角</span><span>柱</span></p></div>
        <div class="it"><svg class="gi"><use href="#ctr"/></svg><p class="j"><span>构</span><span>造</span><span>柱</span></p></div>
        <div class="it"><svg class="gi"><use href="#red"/></svg><p>柱齐墙边</p></div>
      </div>
      <div class="group last">
        <div class="it"><i class="ar">▸</i><p class="j"><span>墙</span><span>体</span></p></div>
        <div class="it"><i class="ar">▸</i><p class="j"><span>门</span><span>窗</span></p></div>
        <div class="it"><i class="ar">▸</i><p>房间屋顶</p></div>
        <div class="it"><i class="ar">▸</i><p>楼梯其他</p></div>
        <div class="it"><i class="ar">▸</i><p class="j"><span>立</span><span>面</span></p></div>
        <div class="it"><i class="ar">▸</i><p class="j"><span>剖</span><span>面</span></p></div>
        <div class="it"><i class="ar">▸</i><p>文字表格</p></div>
        <div class="it"><i class="ar">▸</i><p>尺寸标注</p></div>
        <div class="it"><i class="ar">▸</i><p>符号标注</p></div>
        <div class="it"><i class="ar">▸</i><p>图层控制</p></div>
        <div class="it"><i class="ar">▸</i><p class="j"><span>工</span><span>具</span></p></div>
        <div class="it"><i class="ar">▸</i><p>三维建模</p></div>
        <div class="it"><i class="ar">▸</i><p>图块图案</p></div>
        <div class="it"><i class="ar">▸</i><p>文件布图</p></div>
        <div class="it"><i class="ar">▸</i><p class="j"><span>其</span><span>它</span></p></div>
        <div class="it"><i class="ar">▸</i><p>帮助演示</p></div>
      </div>
    </aside>

    <div class="rightcol">
      <div class="upper">
        <div class="vstrip">
          <div class="vtools">
            <svg class="v"><use href="#s-line"/></svg><svg class="v"><use href="#s-xl"/></svg><svg class="v"><use href="#s-pl"/></svg><svg class="v"><use href="#s-pg"/></svg><svg class="v"><use href="#s-rc"/></svg><svg class="v"><use href="#s-ar"/></svg><svg class="v"><use href="#s-ci"/></svg><svg class="v"><use href="#s-cl"/></svg><svg class="v"><use href="#s-sp"/></svg><svg class="v"><use href="#s-el"/></svg><svg class="v"><use href="#s-ea"/></svg><svg class="v"><use href="#s-in"/></svg><svg class="v"><use href="#s-bk"/></svg><svg class="v"><use href="#s-pt"/></svg><svg class="v"><use href="#s-ha"/></svg><svg class="v"><use href="#s-gr"/></svg><svg class="v"><use href="#s-rg"/></svg><svg class="v"><use href="#s-tb"/></svg><svg class="v"><use href="#s-A"/></svg><svg class="v"><use href="#s-ad"/></svg>
          </div>
          <div class="vgrip"></div>
          <div class="vtools two">
            <svg class="v"><use href="#s-bulb"/></svg><svg class="v"><use href="#s-mt"/></svg><svg class="v"><use href="#s-lm"/></svg><i class="vsep"></i><svg class="v"><use href="#s-ld"/></svg><i class="vsep"></i><svg class="v"><use href="#s-gl"/></svg><svg class="v"><use href="#s-sun"/></svg>
          </div>
        </div>

        <div class="centercol">
          <div class="viewrow">
            <section class="canvas">
              <svg class="drawing" viewBox="117 127 1435 681">
                <path d="M592 255H1214C1252 262 1280 292 1280 328C1280 372 1248 405 1208 405H1185C1040 412 926 520 926 637A107 108 0 0 0 1140 637Q1140 620 1135 605" fill="none" stroke="#b4b4b4"/>
                <path d="M592 255C555 262 529 290 529 325C529 372 560 405 600 405C725 410 883 520 883 637A106.500 108 0 0 1 670 637Q670 620 675 605" fill="none" stroke="#b4b4b4"/>
                <g class="ucs"><path d="M136 745V790H180M183 776l12 13M195 776l-12 13M138 734l4 6 5-6M142 740v6" fill="none" stroke="#9a9a9a"/><path d="M132 786h8v8h-8z" fill="none" stroke="#9a9a9a"/></g>
                <path d="M673 764V806M631 805H716" stroke="#aaa" fill="none"/>
                <circle cx="673" cy="805" r="2" fill="#888"/>
              </svg>
              <div class="viewcube">
                <div class="ring"></div>
                <div class="cube">上</div>
                <span class="dir n">北</span><span class="dir s">南</span><span class="dir w">西</span><span class="dir e">东</span>
              </div>
              <div class="wcs">WCS ⌄</div>
              <div class="navbar">
                <svg class="navicons" viewBox="0 0 28 186"><g fill="none" stroke="#525252"><circle cx="14" cy="26" r="10"/><circle cx="14" cy="26" r="5"/><path d="M7 76V62m4 14V58m4 18V57m4 19V60m3 20l-3 10H9L5 78"/><path d="M6 98l14 14M22 98L8 112"/><path d="M14 122v22M3 133h22"/><ellipse cx="14" cy="133" rx="10" ry="5"/><path d="M5 158h7v7H5zM16 158h7v7h-7zM5 170h7v7H5zM16 170h7v7h-7z"/></g></svg>
              </div>
              <div class="tipbox">
                <h2>小提示</h2>
                <p><span class="q">“Y”</span><i class="dash"></i><span>是</span></p>
                <p><span class="q">“N”</span><i class="dash"></i><span>否</span></p>
              </div>
            </section>
            <div class="vscroll"><span class="up">︿</span><i class="thumb"></i><span class="down">﹀</span></div>
          </div>
          <div class="layoutbar">
            <div class="nav"><span>|◂</span><span>◂</span><span>▸</span><span>▸|</span></div>
            <span class="ltab active">模型</span><span class="ltab">布局1</span><span class="ltab">布局2</span>
            <div class="hscroll"><span>‹</span><span>›</span></div>
          </div>
        </div>

        <div class="rstrip">
          <div class="rtools">
            <svg class="v"><use href="#r-er"/></svg><svg class="v"><use href="#r-co"/></svg><svg class="v"><use href="#r-mi"/></svg><svg class="v"><use href="#r-of"/></svg><svg class="v"><use href="#r-ay"/></svg><svg class="v"><use href="#r-mv"/></svg><svg class="v"><use href="#r-ro"/></svg><svg class="v"><use href="#r-sc"/></svg><svg class="v"><use href="#r-st"/></svg><svg class="v"><use href="#r-tr"/></svg><svg class="v"><use href="#r-tr"/></svg><svg class="v"><use href="#r-bx"/></svg><svg class="v"><use href="#r-bx"/></svg><svg class="v"><use href="#r-j"/></svg><svg class="v"><use href="#r-ch"/></svg><svg class="v"><use href="#r-fi"/></svg><svg class="v"><use href="#r-bl"/></svg><svg class="v"><use href="#r-ex"/></svg>
          </div>
          <div class="rtools two">
            <svg class="v"><use href="#r-w1"/></svg><svg class="v"><use href="#r-w1"/></svg><svg class="v"><use href="#r-w1"/></svg><svg class="v"><use href="#r-w1"/></svg><svg class="v"><use href="#r-w1"/></svg><svg class="v"><use href="#r-w1"/></svg>
          </div>
        </div>
      </div>

      <div class="command">
        <div class="cmdgrip"><i class="dots"></i><span class="cx">✕</span></div>
        <div class="cmdbody">
          <div class="hist">选择对象:  指定镜像线的第一点: 指定镜像线的第二点:</div>
          <div class="input">
            <svg class="ci"><use href="#r-mi"/></svg><span class="cd">▾</span>
            <b class="m">MIRROR</b><span class="prompt">要删除源对象吗?</span><span>[</span><span class="opt">是<em>(Y)</em></span><span class="opt">否<em>(N)</em></span><span>]</span><span class="def">&lt;N&gt;:</span><span class="val">n</span><i class="caret"></i>
            <svg class="redarrow" viewBox="0 0 34 18"><path d="M0 0l14 1-3 3 23 13-2 1L8 7 5 11z" fill="#e23b2e"/></svg>
          </div>
        </div>
        <div class="cmdcfg"><span>⬩,</span><svg class="cogi"><use href="#cog"/></svg></div>
      </div>
    </div>
  </main>

  <footer class="status">
    <span class="scale">比例 1:100 ▾</span>
    <span class="coords">851622,  964712 ,  0</span>
    <div class="stools">
      <svg class="st"><use href="#plus"/></svg><svg class="st"><use href="#ang"/></svg><svg class="st"><use href="#grid"/></svg><svg class="st"><use href="#sqb"/></svg><svg class="st"><use href="#ltri"/></svg><svg class="st"><use href="#sqb"/></svg><svg class="st"><use href="#sq"/></svg><svg class="st"><use href="#ang"/></svg><svg class="st"><use href="#iso"/></svg><svg class="st"><use href="#plus"/></svg><svg class="st"><use href="#plus"/></svg><svg class="st"><use href="#sqb"/></svg><svg class="st"><use href="#sq"/></svg><svg class="st"><use href="#ltri"/></svg><svg class="st"><use href="#plus"/></svg>
    </div>
    <div class="sright">
      <span class="sbtn model">模型</span><svg class="st"><use href="#sq"/></svg><svg class="st"><use href="#grid"/></svg>
      <span class="annot"><svg class="st"><use href="#ltri"/></svg>1:1 ▾</span>
      <svg class="st"><use href="#ltri2"/></svg><svg class="st"><use href="#ltri"/></svg>
      <svg class="st gearst"><use href="#gear"/></svg><svg class="st"><use href="#sq"/></svg><svg class="st"><use href="#ltri"/></svg>
      <span class="sbtn on">编组</span><span class="sbtn">基线</span><span class="sbtn">填充</span><span class="sbtn">加粗</span><span class="sbtn wide">动态标注</span>
      <svg class="st isost"><use href="#iso"/></svg><svg class="st bulbst"><use href="#bulb"/></svg><span class="sdot">▪</span><svg class="st"><use href="#sq"/></svg>
    </div>
  </footer>

  <div class="brand">
    <span class="cai">彩</span><span class="latin">d</span><span class="playdot"><svg viewBox="0 0 28 36" class="pd"><path d="M7 6l6 4 8-8" fill="none" stroke="#e8c531" stroke-width="4"/><circle cx="14" cy="22" r="13" fill="#2a7fd8" stroke="#111" stroke-width="2"/><path d="M10 15l11 7-11 7z" fill="#fff"/></svg></span><span class="latin ng">ng</span><span>视频</span>
  </div>

  <div class="logo">
    <svg class="logoicon" viewBox="1185 752 76 76">
      <path d="M1197 768C1192 775 1192 800 1194 808C1197 818 1204 822 1210 820L1250 793Q1256 788 1250 783L1212 759Q1205 756 1205 764V808Q1206 813 1211 811" fill="none" stroke="#c9c9c9" stroke-width="4.500"/>
      <path d="M1215 781L1228 788L1215 795z" fill="#c9c9c9"/><path d="M1232 781V795" stroke="#c9c9c9" stroke-width="2"/>
    </svg>
    <div class="logotext"><div class="cn">溜溜自学</div><div class="en">ZiXUE.3D66.COM</div></div>
  </div>
</div>
</body>
</html>
```

FILE: styles.css
```css
* { box-sizing: border-box; }
html, body { margin: 0; padding: 0; width: 1592px; height: 893px; overflow: hidden; background: #777; }
.defs { position: absolute; width: 0; height: 0; }
p, h2 { margin: 0; }
i, em { font-style: normal; }
.app { position: relative; width: 1592px; height: 893px; overflow: hidden; font-family: "Noto Sans CJK SC", "Noto Sans", sans-serif; filter: blur(.5px); }
.i { width: 16px; height: 16px; flex: none; }
.dd { font-size: 9px; color: #555; flex: none; }

/* title bar */
.titlebar { display: flex; height: 22px; background: #fff; }
.qat { width: 453px; flex: none; display: flex; align-items: center; padding: 0 0 4px 36px; background: linear-gradient(#a8a8a8, #8f8f8f); }
.qat .t { width: 26px; padding: 0 5px; }
.qat .dd { width: 13px; text-align: center; color: #666; }
.qcombo { width: 191px; height: 22px; margin-left: 5px; display: flex; align-items: center; gap: 2px; padding: 0 6px 0 2px; font-size: 12px; color: #8a8a8a; background: linear-gradient(#d4d4d4, #efefef); flex: none; }
.qcombo b { margin-left: auto; font-size: 9px; color: #444; }
.qdrop { width: 10px; height: 18px; margin-left: 5px; background: #666; color: #111; font-size: 9px; text-align: center; flex: none; }
.apptitle { flex: 1; text-align: center; font: 13.500px/16px "Noto Sans", sans-serif; color: #555; padding-left: 24px; }
.search { width: 213px; flex: none; display: flex; }
.sarrow { width: 13px; background: linear-gradient(#999, #777); color: #111; font-size: 10px; line-height: 20px; text-align: center; }
.sfield { flex: 1; background: #fff; font-size: 12px; font-style: italic; color: #888; padding: 2px 0 0 8px; line-height: 17px; }
.info { width: 270px; flex: none; display: flex; align-items: center; padding: 0 0 3px 5px; background: linear-gradient(#8c8c8c, #6f6f6f); }
.info .i { width: 18px; height: 18px; margin-right: 6px; }
.login { font-size: 12px; line-height: 16px; color: #c4c4c4; margin-left: 1px; flex: none; white-space: nowrap; }
.gap1 { margin-left: 70px; margin-right: 9px; }
.info .ib { width: 20px; margin-right: 6px; }
.info .ic { width: 22px; height: 22px; margin: 0 4px 0 18px; }
.winbtns { width: 179px; flex: none; display: flex; align-items: center; justify-content: space-between; padding: 0 13px 6px 51px; color: #bbb; }
.wmin { width: 11px; height: 1px; background: #bbb; }
.wmax { width: 10px; height: 10px; border: 1px solid #bbb; }
.wclose { font-size: 12px; line-height: 12px; }
.appbtn { position: absolute; left: 0; top: 0; width: 30px; height: 32px; background: linear-gradient(#b0b0b0, #888); border-bottom: 1px solid #555; border-right: 1px solid #666; }
.abi { width: 24px; height: 28px; display: block; margin-top: -5px; }

/* menu */
.menubar { height: 23px; display: flex; align-items: center; gap: 24.500px; padding-left: 43px; font-size: 13px; color: #d0d0d0; background: linear-gradient(#8a8a8a, #5b5b5b); position: relative; text-shadow: 0 0 1px #444; }
.mdi { margin-left: auto; margin-right: 2px; color: #222; font-size: 13px; letter-spacing: 1px; }

/* tabs */
.tabstrip { height: 31px; display: flex; background: linear-gradient(#7f7f7f, #737373); padding: 5px 0 0 15px; }
.doctab { width: 132px; height: 26px; padding: 2px 0 0 15px; font: 14px/20px "Noto Sans", sans-serif; color: #333; background: linear-gradient(#cfcfcf, #a5a5a5); border-radius: 10px 14px 0 0; flex: none; }
.newtab { width: 24px; height: 22px; margin: 2px 0 0 10px; background: #6b6b6b; border-radius: 8px 10px 0 0; flex: none; }

/* toolbars */
.toolbars { height: 51px; padding-top: 2px; background: #6a6a6a; }
.tbrow { display: flex; height: 20px; }
.r2 { height: 22px; margin-top: 3px; }
.seg { display: flex; align-items: center; flex: none; }
.s1 { width: 556px; margin-left: 2px; padding-left: 2px; background: #e4e4e4; }
.t20 { width: 20px; padding: 0 2px; }
.t20b { width: 20px; text-align: center; }
.t16 { width: 15px; }
.sep { width: 1px; height: 16px; background: #aaa; margin: 0 1px; flex: none; }
.sepq { margin-left: 10px; margin-right: 0; }
.s2 { width: 525px; margin-left: 9px; background: #aeaeae; }
.sty { display: flex; align-items: center; height: 20px; flex: none; color: #7a7a7a; font-size: 14px; font-family: "Liberation Sans", sans-serif; }
.sty .i { width: 22px; height: 18px; padding: 1px 3px; background: #e6e6e6; }
.sty b { font-weight: 400; font-size: 12px; color: #999; margin-left: auto; padding-right: 6px; line-height: 12px; }
.w1 { width: 129px; } .w2 { width: 128px; margin-left: 1px; } .w3 { width: 129px; margin-left: 1px; } .w4 { width: 137px; margin-left: 0; }
.pc { text-align: center; }
.pc1 { margin-left: 15px; } .pc2 { margin-left: 17px; } .pc3 { margin-left: 6px; } .pc4 { margin-left: 22px; }
.s3 { width: 474px; background: #e6e6e6; }
.s3 .t20 { width: 20.100px; }
.s3 .sep { margin: 0 2px; }
.c1 { width: 193px; background: #dcdcdc; }
.wscombo { width: 150px; height: 22px; flex: none; display: flex; align-items: center; padding: 0 6px 0 11px; font-size: 13px; color: #444; background: linear-gradient(#e6e6e6, #cfcfcf); }
.wscombo b { margin-left: auto; font-weight: 400; color: #888; font-size: 12px; line-height: 12px; }
.c2 { width: 354px; margin-left: 8px; background: #dcdcdc; }
.layer { width: 262px; height: 22px; flex: none; display: flex; align-items: center; background: #bdbdbd; font: 14px "Liberation Sans", sans-serif; color: #666; padding-left: 3px; }
.layer b { margin-left: auto; font-weight: 400; color: #aaa; font-size: 12px; padding-right: 6px; line-height: 12px; }
.l { width: 14px; height: 14px; margin-right: 2px; flex: none; }
.swatch { width: 10px; height: 10px; border: 1px solid #333; background: #fff; flex: none; margin-right: 2px; }
.layer span { margin-left: 2px; }
.c3 { width: 503px; background: #dcdcdc; }
.by { height: 22px; flex: none; display: flex; align-items: center; background: #bcbcbc; font: 12.500px/22px "Liberation Mono", monospace; color: #333; padding-left: 4px; margin-right: 2px; }
.by b { margin-left: auto; font-weight: 400; color: #777; font-size: 12px; padding-right: 6px; line-height: 12px; font-family: "Noto Sans", sans-serif; }
.b1 { width: 128px; margin-left: 1px; background: #d9d9d9; }
.b2 { width: 137px; margin-left: 4px; } .b3 { width: 107px; margin-left: 3px; } .b4 { width: 104px; margin-left: 1px; padding-left: 17px; }
.ln { height: 1px; background: #444; flex: none; margin-right: 6px; }
.ln1 { width: 52px; } .ln2 { width: 31px; margin-left: 3px; }
.dim { color: #888; }
.c4 { width: 424px; margin-left: 6px; padding-left: 2px; background: #e4e4e4; }

/* workspace */
.workspace { height: 750px; display: flex; background: #6f6f6f; }
.tpanel { width: 88px; flex: none; padding-top: 1px; background: #ececec; }
.tphead { height: 21px; padding-left: 4px; font-size: 13px; line-height: 20px; color: #444; background: #a6a6a6; border-radius: 3px 0 0 0; }
.group { padding: 6px 0 0; border-bottom: 1px solid #bbb; height: 38px; }
.group:nth-child(3) { height: 100px; padding-top: 3px; }
.group:nth-child(4) { height: 116px; padding-top: 2px; }
.group:nth-child(5) { height: 68px; padding-top: 2px; }
.group.last { height: auto; border: 0; padding-top: 1px; }
.it { height: 15.700px; display: flex; align-items: center; position: relative; font-size: 13px; line-height: 15.700px; color: #555; }
.it p { width: 52px; margin-left: 16px; white-space: nowrap; }
.it p.j { display: flex; justify-content: space-between; }
.ar { position: absolute; left: 0; font-size: 11px; color: #2e6ea6; line-height: 15px; }
.gi { position: absolute; left: 0; top: 2px; width: 12px; height: 12px; }

.rightcol { flex: 1; display: flex; flex-direction: column; min-width: 0; }
.upper { height: 702px; display: flex; }
.vstrip { width: 29px; flex: none; padding: 6px 5px 0 4px; }
.vtools { background: #ececec; display: flex; flex-direction: column; align-items: center; padding-top: 1px; height: 384px; }
.vtools.two { height: 126px; padding-top: 1px; }
.v { width: 16px; height: 16px; margin: 1.600px 0; flex: none; }
.vtools .v { margin: 1.600px 0; }
.vsep { width: 20px; height: 1px; background: #bbb; margin: 3px 0; flex: none; }
.vgrip { height: 9px; background: #4d4d4d; }
.centercol { width: 1454px; flex: none; display: flex; flex-direction: column; }
.viewrow { height: 681px; display: flex; }
.canvas { position: relative; width: 1435px; height: 681px; overflow: hidden; background-color: #000;
  background-image:
    linear-gradient(90deg, #1e1e1e 1px, transparent 1px),
    linear-gradient(#1e1e1e 1px, transparent 1px),
    linear-gradient(90deg, #111 1px, transparent 1px),
    linear-gradient(#111 1px, transparent 1px);
  background-size: 157px 158px, 157px 158px, 31.400px 31.600px, 31.400px 31.600px;
  background-position: 28px 36px, 28px 36px, 28px 36px, 28px 36px; }
.drawing { position: absolute; inset: 0; width: 1435px; height: 681px; }
.viewcube { position: absolute; left: 1291px; top: 1px; width: 140px; height: 140px; }
.ring { position: absolute; left: 18px; top: 18px; width: 104px; height: 105px; border-radius: 50%; border: 12px solid #333; }
.cube { position: absolute; left: 48px; top: 49px; width: 45px; height: 45px; background: #aeaeae; color: #888; font-size: 28px; line-height: 44px; text-align: center; }
.dir { position: absolute; font-size: 16px; line-height: 18px; color: #9a9a9a; font-weight: 500; }
.n { left: 62px; top: 14px; } .s { left: 62px; top: 112px; } .w { left: 14px; top: 61px; } .e { left: 112px; top: 61px; }
.wcs { position: absolute; left: 1341px; top: 149px; width: 41px; height: 15px; border-radius: 4px; background: #777; color: #999; font: 9px/15px "Liberation Sans", sans-serif; padding-left: 3px; }
.navbar { position: absolute; left: 1403px; top: 185px; width: 28px; height: 186px; border-radius: 3px; background: #3c3c3c; }
.navicons { display: block; width: 28px; height: 186px; }
.tipbox { position: absolute; left: 101px; top: 493px; width: 350px; height: 175px; padding: 8px 0 0 31px; color: #e8eef4; background: #1f5080; }
.tipbox h2 { font-size: 25px; font-weight: 500; line-height: 36px; }
.tipbox p { display: flex; align-items: center; height: 50px; margin-left: 11px; font-size: 25px; font-weight: 500; line-height: 50px; }
.tipbox h2 + p { margin-top: 8px; }
.q { width: 53px; font: 700 23px/50px "Liberation Sans", "Noto Sans", sans-serif; flex: none; }
.dash { width: 53px; height: 2px; background: #dfe7ef; margin-right: 14px; flex: none; }
.vscroll { width: 19px; flex: none; background: #f2f2f2; display: flex; flex-direction: column; align-items: center; font-size: 11px; color: #444; position: relative; }
.up { height: 13px; line-height: 18px; font-weight: 700; }
.thumb { width: 16px; height: 22px; background: #ccc; margin-top: 4px; flex: none; }
.down { margin-top: auto; height: 12px; line-height: 8px; font-weight: 700; }
.layoutbar { height: 17px; display: flex; align-items: center; background: #f0f0f0; font-size: 12px; color: #444; border-top: 1px solid #bbb; border-bottom: 1px solid #aaa; }
.nav { display: flex; width: 66px; margin-left: 1px; justify-content: space-around; font-size: 10px; color: #666; flex: none; }
.ltab { position: relative; height: 15px; line-height: 15px; padding: 0 8px 0 9px; margin-right: 1px; flex: none; }
.ltab::after { content: ""; position: absolute; right: 0; top: 0; width: 1px; height: 15px; background: #777; transform: skewX(-18deg); }
.ltab.active { background: #333; color: #eee; padding: 0 13px 0 10px; margin-right: 3px; clip-path: polygon(6px 0, 100% 0, calc(100% - 6px) 100%, 0 100%); }
.hscroll { margin-left: auto; width: 508px; height: 15px; border-left: 5px solid #d8d8d8; display: flex; justify-content: space-between; padding: 0 26px 0 10px; font-size: 14px; line-height: 13px; font-weight: 700; color: #555; flex: none; }
.rstrip { flex: 1; padding: 6px 0 0 4px; }
.rtools { height: 350px; background: #ececec; display: flex; flex-direction: column; padding: 0 0 0 1px; overflow: hidden; }
.rtools .v { margin: 1.600px 0; width: 16px; }
.rtools.two { height: 120px; margin-top: 10px; padding-top: 1px; }

/* command line */
.command { height: 48px; display: flex; position: relative; }
.cmdgrip { width: 25px; margin-left: 4px; flex: none; background: linear-gradient(#999, #555); color: #fff; display: flex; flex-direction: column; align-items: center; }
.dots { width: 22px; height: 6px; margin-top: 4px; border-top: 2px dotted #bbb; border-bottom: 2px dotted #bbb; }
.cx { font-size: 14px; font-weight: 700; line-height: 16px; margin-top: 4px; }
.cmdbody { flex: 1; min-width: 0; margin-top: 1px; }
.hist { height: 22px; padding-left: 3px; font: 17.200px/22px "Liberation Mono", "Noto Sans CJK SC", monospace; white-space: pre; color: #222; background: #b9b9b9; }
.input { height: 25px; display: flex; align-items: center; background: #fff; font: 16px/25px "Liberation Mono", "Noto Sans CJK SC", monospace; color: #333; white-space: pre; }
.ci { width: 18px; height: 18px; margin-left: 5px; flex: none; }
.cd { font-size: 8px; color: #999; width: 16px; text-align: center; }
.m { color: #111; width: 63px; }
.prompt { width: 139px; font-size: 17px; }
.opt { background: #dcdcdc; margin-left: 1px; padding: 0 1px; height: 22px; line-height: 22px; margin-right: 4px; }
.opt em { color: #3b4fc4; font-weight: 700; }
.def { margin-left: 8px; width: 50px; font-size: 14px; }
.val { width: 14px; color: #000; font-weight: 700; }
.caret { width: 1px; height: 18px; background: #333; margin-left: 3px; }
.redarrow { width: 32px; height: 18px; margin-left: 9px; flex: none; }
.cmdcfg { position: absolute; right: 31px; top: -2px; width: 57px; height: 30px; background: #fff; border: 1px solid #7aa9d0; border-top: 0; display: flex; align-items: center; justify-content: flex-end; gap: 8px; padding-right: 8px; color: #1f7fc4; font-size: 10px; }
.cogi { width: 20px; height: 20px; }

/* status bar */
.status { height: 16px; display: flex; align-items: flex-start; background: linear-gradient(#9d9d9d, #8b8b8b); font-size: 12px; line-height: 18px; color: #3f3f3f; overflow: hidden; position: relative; }
.scale { width: 92px; flex: none; padding-left: 1px; font-family: "Liberation Mono", "Noto Sans CJK SC", monospace; font-size: 12.500px; white-space: pre; }
.coords { width: 150px; flex: none; color: #555; font-family: "Liberation Mono", monospace; font-size: 12.200px; white-space: pre; }
.stools { display: flex; align-items: center; gap: 5px; background: #b0b0b0; padding: 1px 3px; height: 16px; }
.st { width: 14px; height: 14px; margin-top: 1px; flex: none; }
.sright { position: absolute; left: 1079px; top: 0; display: flex; align-items: flex-start; gap: 3px; height: 16px; }
.sbtn { width: 29px; text-align: center; background: #b5b5b5; height: 16px; flex: none; }
.sbtn.on { background: #9fcbe6; color: #246; }
.sbtn.wide { width: 54px; }
.model { background: #a8a8a8; }
.annot { display: flex; margin: 0 10px 0 18px; gap: 2px; background: #a8a8a8; padding: 0 6px; }
.gearst { margin-left: 8px; }
.isost { margin-left: 6px; }
.bulbst { margin-left: 1px; }
.sdot { font-size: 9px; margin-left: 12px; }
.sdot + .st { margin-left: 5px; }

/* overlays */
.brand { position: absolute; left: 52px; top: 50px; height: 56px; display: flex; align-items: center; color: #fff; font-size: 42px; font-weight: 700; font-style: italic; line-height: 50px; -webkit-text-stroke: 4px #1a1a1a; paint-order: stroke fill; white-space: nowrap; }
.cai { margin-right: 8px; }
.latin { font-family: "Inter", "Noto Sans", sans-serif; font-size: 50px; font-weight: 700; font-style: normal; letter-spacing: -1px; position: relative; top: 3px; }
.ng { letter-spacing: -4px; margin-right: 3px; }
.playdot { display: block; width: 18px; flex: none; margin: 0 1px 0 -1px; }
.pd { display: block; width: 20px; height: 32px; }
.logo { position: absolute; left: 1164px; top: 710px; width: 340px; height: 160px; display: flex; align-items: center; padding: 0 0 6px 21px; background: #1f2d56; }
.logoicon { width: 76px; height: 76px; flex: none; }
.logotext { margin-left: 18px; color: #c9c9c9; }
.cn { font-size: 47px; font-weight: 700; line-height: 50px; letter-spacing: 4px; white-space: nowrap; margin-left: -1px; }
.en { font: 17.500px/20px "Inter", "Noto Sans", sans-serif; letter-spacing: 3.900px; margin-top: 4px; white-space: nowrap; font-weight: 300; }
```
